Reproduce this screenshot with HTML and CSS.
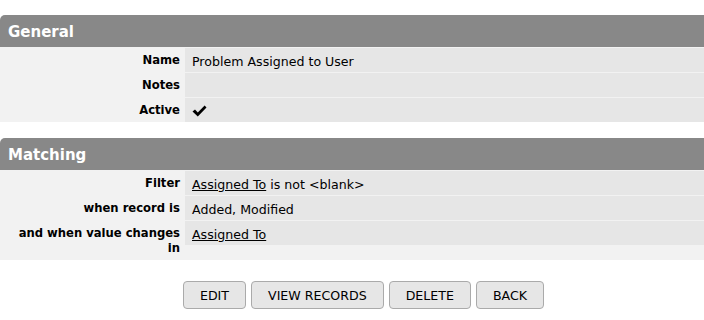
FILE: index.html
```html
<!DOCTYPE html>
<html lang="en">
<head>
    <meta charset="UTF-8">
    <title>Rule Details</title>
    <link rel="stylesheet" href="styles.css">
</head>
<body>
    <!-- General -->
    <div class="section">
        <div class="section-head">General</div>
        <div class="fields">
            <div class="label">Name</div>
            <div class="value">Problem Assigned to User</div>
            <div class="label">Notes</div>
            <div class="value"></div>
            <div class="label">Active</div>
            <div class="value">
                <svg class="check" width="15" height="12" viewBox="0 0 15 12">
                    <path d="M0.5 6.5 L3 4.5 L5.8 7.6 L12.6 0.6 L14.5 2.4 L5.8 11.4 Z" fill="#000"/>
                </svg>
            </div>
        </div>
    </div>

    <!-- Matching -->
    <div class="section">
        <div class="section-head">Matching</div>
        <div class="fields">
            <div class="label">Filter</div>
            <div class="value"><a href="#">Assigned To</a> is not &lt;blank&gt;</div>
            <div class="label">when record is</div>
            <div class="value">Added, Modified</div>
            <div class="label">and when value changes in</div>
            <div class="value"><a href="#">Assigned To</a></div>
        </div>
    </div>

    <div class="actions">
        <button class="btn">EDIT</button>
        <button class="btn">VIEW RECORDS</button>
        <button class="btn">DELETE</button>
        <button class="btn">BACK</button>
    </div>
</body>
</html>
```

FILE: styles.css
```css
body {
    font-family: "DejaVu Sans", Verdana, sans-serif;
    font-size: 12px;
    color: #000;
    margin: 0;
    padding-top: 15px;
    background-color: #fff;
}

.section {
    margin-bottom: 16px;
}

.section-head {
    background-color: #888;
    color: #fff;
    font-size: 15px;
    font-weight: bold;
    height: 32px;
    line-height: 35px;
    padding-left: 8px;
    border-top-left-radius: 5px;
}

.fields {
    display: grid;
    grid-template-columns: 184px 1fr;
    column-gap: 1px;
    row-gap: 1px;
    padding-top: 1px;
    background-color: #f2f2f2;
}

.label {
    font-weight: bold;
    font-size: 11.6px;
    text-align: right;
    padding: 5px 4px 4px 10px;
    line-height: 15px;
}

.value {
    align-self: start;
    background-color: #e6e6e6;
    font-size: 12.6px;
    height: 24px;
    padding: 2px 7px 0 7px;
    box-sizing: border-box;
    display: flex;
    align-items: center;
}

.value a {
    color: #000;
    text-decoration: underline;
    margin-right: 4px;
}

.check {
    display: block;
}

.actions {
    display: flex;
    justify-content: center;
    gap: 5px;
    margin-top: 21px;
    padding-left: 23px;
}

.btn {
    font-family: "DejaVu Sans", Verdana, sans-serif;
    font-size: 12.6px;
    color: #000;
    background-color: #e6e6e6;
    border: 1px solid #aaa;
    border-radius: 4px;
    height: 28px;
    padding: 1px 16px 0;
    cursor: pointer;
}

.btn:hover {
    background-color: #d8d8d8;
}
```
